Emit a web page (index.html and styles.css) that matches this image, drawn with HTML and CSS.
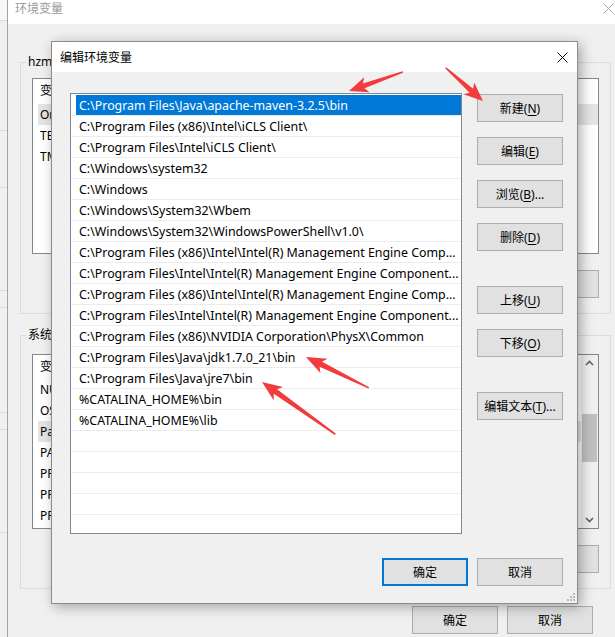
FILE: index.html
```html
<!DOCTYPE html>
<html lang="zh-CN">
<head>
<meta charset="utf-8">
<title>编辑环境变量</title>
<link rel="stylesheet" href="styles.css">
</head>
<body>
<div class="screen">
  <div class="behind">
    <div class="bseg b1"></div>
    <div class="bseg b2"></div>
    <div class="bseg b3"></div>
    <div class="bseg b4"></div>
    <div class="bseg b5"></div>
    <div class="bseg b6"></div>
    <div class="bseg b7"></div>
    <div class="bseg b8"></div>
  </div>

  <div class="envwin">
    <div class="wtitle">
      <span class="wtitle-text">环境变量</span>
      <svg class="wclose" width="11" height="11" viewBox="0 0 11 11"><path d="M0.5 0.5L10.5 10.5M10.5 0.5L0.5 10.5" stroke="#a8a8a8" stroke-width="1" fill="none"/></svg>
    </div>
    <div class="wbody">
      <fieldset class="group g1">
        <legend>hzm 的用户变量(U)</legend>
        <div class="vlist l1">
          <div class="vcol">
            <div class="vhead">变量</div>
            <div class="vrow vsel">OneDrive</div>
            <div class="vrow">TEMP</div>
            <div class="vrow">TMP</div>
          </div>
        </div>
        <div class="gbtns">
          <div class="btn">新建(<u>N</u>)...</div>
          <div class="btn">编辑(<u>E</u>)...</div>
          <div class="btn">删除(<u>D</u>)</div>
        </div>
      </fieldset>

      <fieldset class="group g2">
        <legend>系统变量(S)</legend>
        <div class="vlist l2">
          <div class="vcol">
            <div class="vhead">变量</div>
            <div class="vrow">NUMBER_OF_PROCESSORS</div>
            <div class="vrow">OS</div>
            <div class="vrow vsel">Path</div>
            <div class="vrow">PATHEXT</div>
            <div class="vrow">PROCESSOR_ARCHITECTURE</div>
            <div class="vrow">PROCESSOR_IDENTIFIER</div>
            <div class="vrow">PROCESSOR_LEVEL</div>
          </div>
          <div class="sbar">
            <svg class="chev" width="17" height="17" viewBox="0 0 17 17"><path d="M5 10L8.5 6.5L12 10" stroke="#606060" stroke-width="1.6" fill="none"/></svg>
            <div class="strack"><div class="sthumb"></div></div>
            <svg class="chev" width="17" height="17" viewBox="0 0 17 17"><path d="M5 7L8.5 10.5L12 7" stroke="#606060" stroke-width="1.6" fill="none"/></svg>
          </div>
        </div>
        <div class="gbtns">
          <div class="btn">新建(<u>W</u>)...</div>
          <div class="btn">编辑(<u>I</u>)...</div>
          <div class="btn">删除(<u>L</u>)</div>
        </div>
      </fieldset>

      <div class="wfoot">
        <div class="btn">确定</div>
        <div class="btn">取消</div>
      </div>
    </div>
  </div>

  <div class="dialog">
    <div class="dtitle">
      <span>编辑环境变量</span>
      <svg class="dclose" width="11" height="11" viewBox="0 0 11 11"><path d="M0.5 0.5L10.5 10.5M10.5 0.5L0.5 10.5" stroke="#000" stroke-width="1" fill="none"/></svg>
    </div>
    <div class="dbody">
      <div class="dmain">
        <div class="plist">
          <div class="prow psel">C:\Program Files\Java\apache-maven-3.2.5\bin</div>
          <div class="prow">C:\Program Files (x86)\Intel\iCLS Client\</div>
          <div class="prow">C:\Program Files\Intel\iCLS Client\</div>
          <div class="prow">C:\Windows\system32</div>
          <div class="prow">C:\Windows</div>
          <div class="prow">C:\Windows\System32\Wbem</div>
          <div class="prow">C:\Windows\System32\WindowsPowerShell\v1.0\</div>
          <div class="prow">C:\Program Files (x86)\Intel\Intel(R) Management Engine Comp...</div>
          <div class="prow">C:\Program Files\Intel\Intel(R) Management Engine Component...</div>
          <div class="prow">C:\Program Files (x86)\Intel\Intel(R) Management Engine Comp...</div>
          <div class="prow">C:\Program Files\Intel\Intel(R) Management Engine Component...</div>
          <div class="prow">C:\Program Files (x86)\NVIDIA Corporation\PhysX\Common</div>
          <div class="prow">C:\Program Files\Java\jdk1.7.0_21\bin</div>
          <div class="prow">C:\Program Files\Java\jre7\bin</div>
          <div class="prow">%CATALINA_HOME%\bin</div>
          <div class="prow">%CATALINA_HOME%\lib</div>
          <div class="prow"></div>
          <div class="prow"></div>
          <div class="prow"></div>
          <div class="prow"></div>
        </div>
        <div class="dbtns">
          <div class="btn">新建(<u>N</u>)</div>
          <div class="btn">编辑(<u>E</u>)</div>
          <div class="btn">浏览(<u>B</u>)...</div>
          <div class="btn">删除(<u>D</u>)</div>
          <div class="btn spaced">上移(<u>U</u>)</div>
          <div class="btn">下移(<u>O</u>)</div>
          <div class="btn spaced">编辑文本(<u>T</u>)...</div>
        </div>
      </div>
      <div class="dfoot">
        <div class="btn btn-default">确定</div>
        <div class="btn">取消</div>
      </div>
    </div>
    <svg class="grip" width="9" height="9" viewBox="0 0 9 9">
      <rect x="7" y="1" width="2" height="2" fill="#b8b8b8"/>
      <rect x="4" y="4" width="2" height="2" fill="#b8b8b8"/>
      <rect x="7" y="4" width="2" height="2" fill="#b8b8b8"/>
      <rect x="1" y="7" width="2" height="2" fill="#b8b8b8"/>
      <rect x="4" y="7" width="2" height="2" fill="#b8b8b8"/>
      <rect x="7" y="7" width="2" height="2" fill="#b8b8b8"/>
    </svg>
  </div>

  <svg class="arrows" width="615" height="637" viewBox="0 0 615 637">
    <g fill="#f23b3b">
      <polygon transform="translate(349 91) rotate(-19.4)" points="0,0 19,-8 15.5,-2.6 57,-0.8 57,0.8 15.5,2.6 19,8"/>
      <polygon transform="translate(483 101) rotate(-138.3)" points="0,0 19,-8 15.5,-2.6 50,-0.8 50,0.8 15.5,2.6 19,8"/>
      <polygon transform="translate(306 357) rotate(26.2)" points="0,0 20,-8 16.5,-2.8 70,-0.8 70,0.8 16.5,2.8 20,8"/>
      <polygon transform="translate(262 382) rotate(35.5)" points="0,0 20,-8 16.5,-2.8 90,-0.8 90,0.8 16.5,2.8 20,8"/>
    </g>
  </svg>
</div>
</body>
</html>
```

FILE: styles.css
```css
* { box-sizing: border-box; }

body {
  margin: 0;
  font-family: "Noto Sans", "Noto Sans CJK SC", sans-serif;
  font-size: 12px;
  color: #000;
  background: #f0f0f0;
}

.screen {
  position: relative;
  width: 615px;
  height: 637px;
  overflow: hidden;
  display: flex;
  background: #f0f0f0;
}

/* window further behind, visible as a thin strip */
.behind {
  width: 7px;
  flex: none;
  display: flex;
  flex-direction: column;
  background: #f0f0f0;
}
.bseg { border-bottom: 1px solid #d9d9d9; flex: none; }
.b1 { height: 21px; background: #f7f7f7; }
.b2 { height: 110px; }
.b3 { height: 57px; }
.b4 { height: 103px; }
.b5 { height: 17px; }
.b6 { height: 105px; }
.b7 { height: 17px; }
.b8 { height: 103px; }

/* 环境变量 window */
.envwin {
  flex: 1;
  display: flex;
  flex-direction: column;
  border-left: 1px solid #a4a4a4;
  background: #f0f0f0;
}
.wtitle {
  height: 24px;
  flex: none;
  background: #fff;
  display: flex;
  justify-content: space-between;
  align-items: flex-start;
  padding: 0 1px 0 7px;
  line-height: 17px;
  color: #9a9a9a;
}
.wclose { margin-top: 3px; }

.wbody {
  flex: 1;
  display: flex;
  flex-direction: column;
  padding: 30px 0 0 12px;
}

.group {
  width: 591px;
  margin: 0;
  border: 1px solid #dcdcdc;
  padding: 8px 11px 15px 11px;
}
.group legend {
  padding: 0 2px;
  margin-left: -6px;
  line-height: 16px;
}
.g2 { margin-top: 13px; padding-top: 11px; }

.vlist {
  border: 1px solid #828790;
  background: #fff;
  display: flex;
}
.l1 { height: 176px; }
.l2 { height: 175px; }
.vcol { flex: 1; }
.vhead {
  height: 25px;
  line-height: 24px;
  padding-left: 7px;
}
.l2 .vhead { height: 24px; }
.vrow {
  height: 21px;
  line-height: 21px;
  margin-left: 5px;
  padding-left: 2px;
}
.vsel { background: #e5e5e5; }

.sbar {
  width: 17px;
  flex: none;
  background: #f0f0f0;
  display: flex;
  flex-direction: column;
}
.strack { flex: 1; padding: 42px 1px 0 1px; }
.sthumb { height: 48px; background: #c0c0c0; }

.gbtns {
  display: flex;
  justify-content: flex-end;
  gap: 9px;
  margin-top: 16px;
}

.btn {
  width: 86px;
  height: 28px;
  flex: none;
  border: 1px solid #adadad;
  background: #e1e1e1;
  display: flex;
  align-items: center;
  justify-content: center;
  white-space: nowrap;
}
.btn u { text-decoration: underline; text-underline-offset: 2px; }
.btn-default { border: 2px solid #0078d7; }

.wfoot {
  display: flex;
  justify-content: flex-end;
  gap: 9px;
  padding-right: 22px;
  margin-top: 17px;
}

/* 编辑环境变量 dialog (floats above the window) */
.dialog {
  position: absolute;
  left: 51px;
  top: 41px;
  width: 527px;
  height: 563px;
  border: 1px solid #8c8c8c;
  background: #f0f0f0;
  box-shadow: 3px 3px 12px rgba(0, 0, 0, 0.32);
  display: flex;
  flex-direction: column;
}
.dtitle {
  height: 30px;
  flex: none;
  background: #fff;
  display: flex;
  align-items: center;
  justify-content: space-between;
  padding: 0 9px 0 8px;
}
.dbody {
  flex: 1;
  padding: 21px 14px 0 18px;
  display: flex;
  flex-direction: column;
}
.dmain { display: flex; gap: 15px; }

.plist {
  width: 392px;
  height: 441px;
  border: 1px solid #828790;
  background: #fff;
  padding-top: 1px;
  overflow: hidden;
}
.prow {
  height: 21px;
  line-height: 21px;
  font-size: 12.4px;
  border-bottom: 1px solid #ececec;
  padding-left: 8px;
  white-space: nowrap;
  overflow: hidden;
}
.psel {
  background: linear-gradient(to right, transparent 5px, #0078d7 5px);
  color: #fff;
}

.dbtns {
  display: flex;
  flex-direction: column;
  gap: 15px;
  padding-top: 1px;
}
.dbtns .spaced { margin-top: 20px; }

.dfoot {
  display: flex;
  justify-content: flex-end;
  gap: 9px;
  margin-top: 24px;
}

.grip {
  position: absolute;
  right: 2px;
  bottom: 2px;
}

.arrows {
  position: absolute;
  left: 0;
  top: 0;
  pointer-events: none;
}
```
